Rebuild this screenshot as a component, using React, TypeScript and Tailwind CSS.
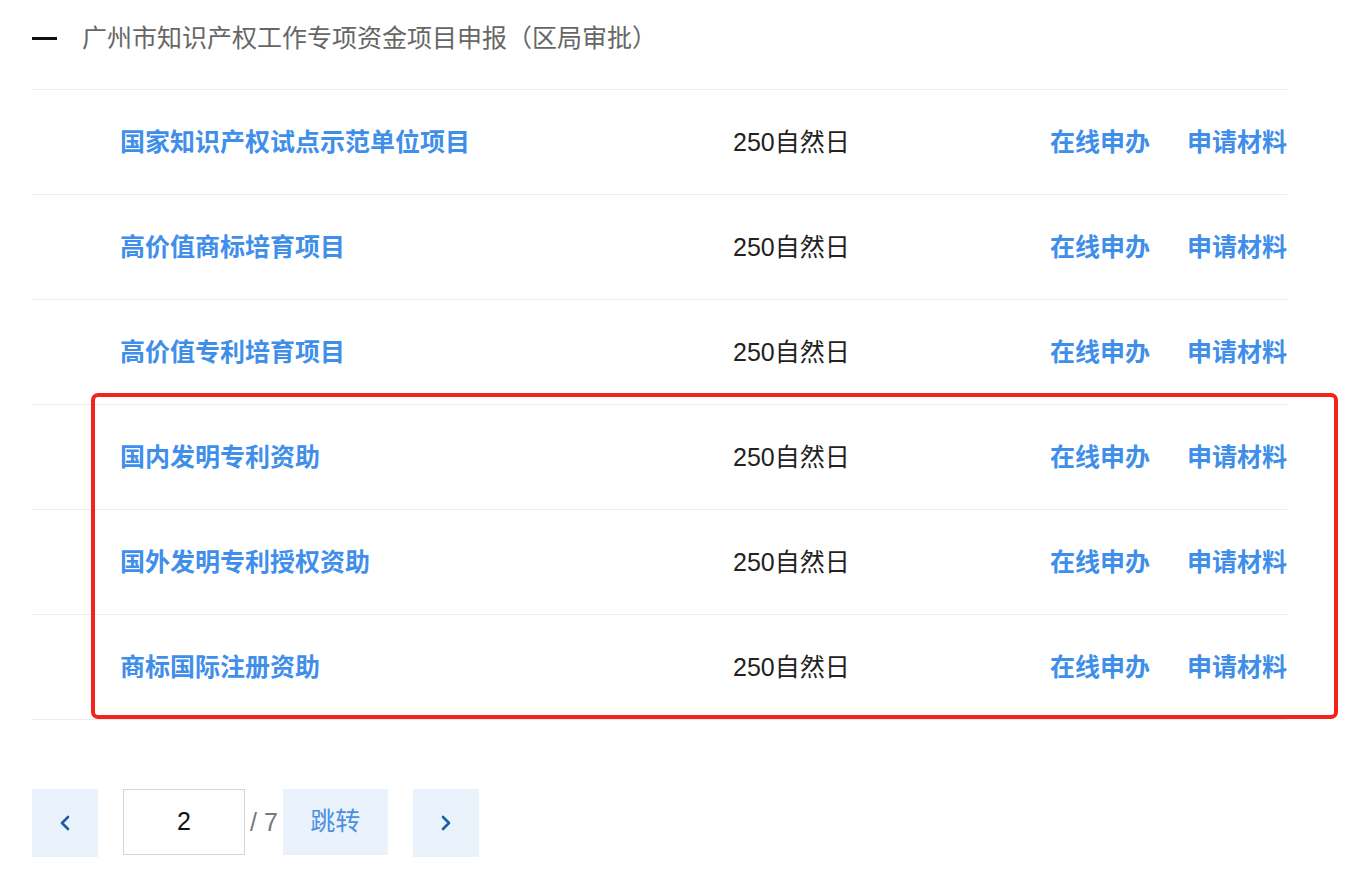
import React from "react";

const rows = [
  "国家知识产权试点示范单位项目",
  "高价值商标培育项目",
  "高价值专利培育项目",
  "国内发明专利资助",
  "国外发明专利授权资助",
  "商标国际注册资助",
];

const font = { fontFamily: '"Liberation Sans", "Noto Sans CJK SC", sans-serif' };

const Chevron = ({ dir }: { dir: "left" | "right" }) => (
  <svg width="12" height="18" viewBox="0 0 12 18" fill="none">
    <path
      d={dir === "left" ? "M9 3 L3 9 L9 15" : "M3 3 L9 9 L3 15"}
      stroke="#1b5ea8"
      strokeWidth="2.6"
      strokeLinecap="round"
      strokeLinejoin="round"
    />
  </svg>
);

export default function App() {
  return (
    <div className="relative min-h-screen bg-white" style={font}>
      <div className="px-[32px] w-[1319px]">
        <div className="h-[90px] border-b border-[#ececec] pt-[20px] flex items-start">
          <div className="flex items-center h-[36px]">
            <span className="block w-[25px] h-[3px] bg-[#111]" />
            <span className="ml-[25px] text-[25px] leading-[36px] text-[#666]">
              广州市知识产权工作专项资金项目申报（区局审批）
            </span>
          </div>
        </div>

        {rows.map((name) => (
          <div key={name} className="h-[105px] border-b border-[#ececec] flex items-center pl-[88px] pt-[2px]">
            <div className="w-[613px] text-[25px] font-bold text-[#3f8fea]">{name}</div>
            <div className="flex-1 text-[25px] text-[#222]">250自然日</div>
            <div className="flex gap-[37px] text-[25px] font-bold text-[#3f8fea]">
              <span>在线申办</span>
              <span>申请材料</span>
            </div>
          </div>
        ))}

        <div className="mt-[69px] flex items-start">
          <button className="w-[66px] h-[68px] bg-[#eaf3fc] flex items-center justify-center">
            <Chevron dir="left" />
          </button>
          <div className="ml-[25px] w-[122px] h-[66px] border border-[#d4d4d4] flex items-center justify-center text-[25px] text-[#111]">
            2
          </div>
          <span className="ml-[5px] h-[66px] leading-[66px] text-[25px] text-[#777]">/ 7</span>
          <button className="ml-[5px] w-[105px] h-[66px] bg-[#eaf3fc] text-[25px] text-[#4b90e0]">跳转</button>
          <button className="ml-[25px] w-[66px] h-[68px] bg-[#eaf3fc] flex items-center justify-center">
            <Chevron dir="right" />
          </button>
        </div>
      </div>

      <div className="absolute left-[91px] top-[393px] w-[1247px] h-[326px] border-[4px] border-[#f5241a] rounded-[7px] pointer-events-none" />
    </div>
  );
}
